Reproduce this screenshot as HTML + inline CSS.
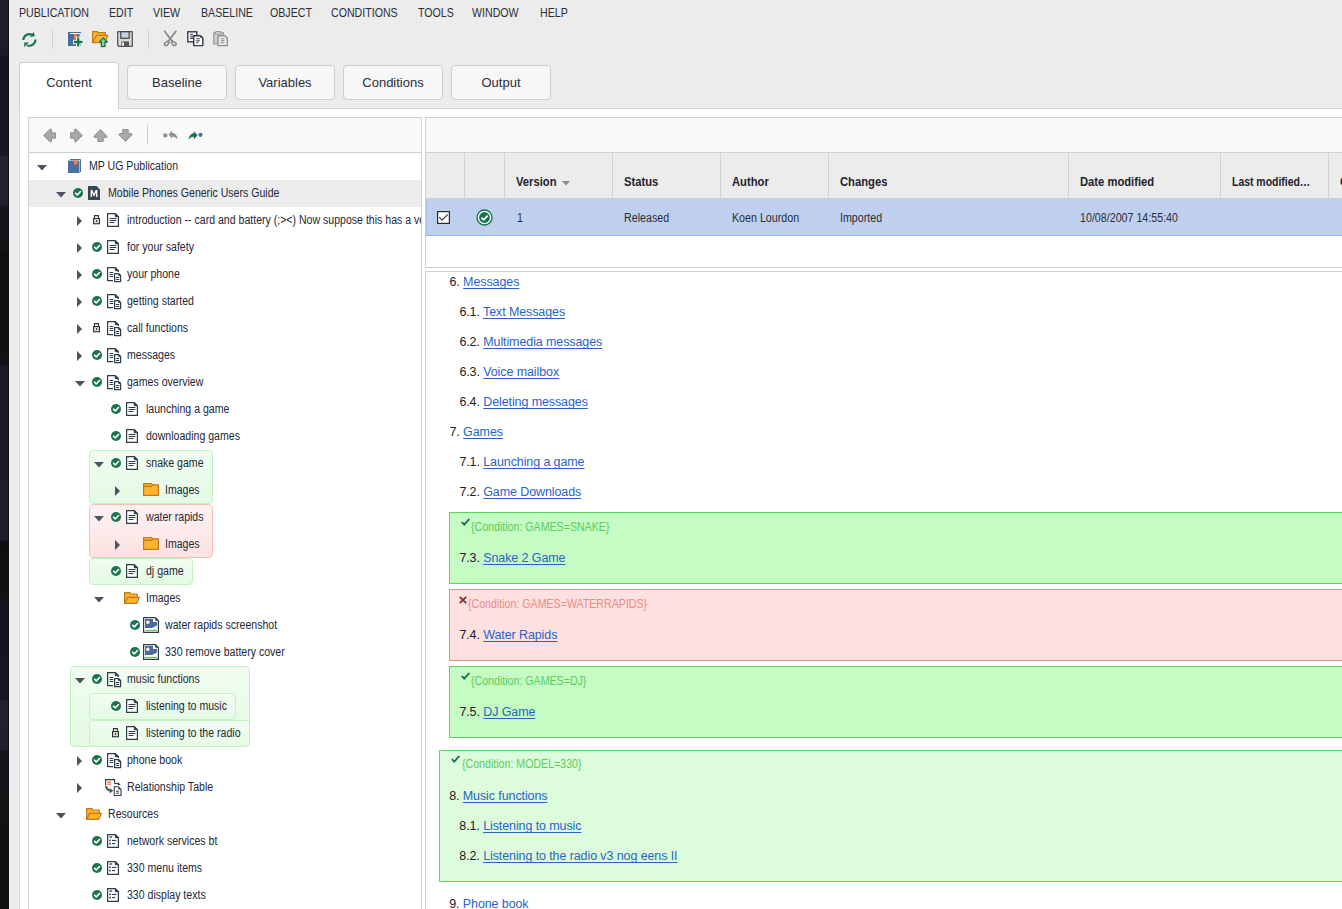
<!DOCTYPE html><html><head><meta charset="utf-8"><title>Publication</title><style>
*{margin:0;padding:0;box-sizing:border-box}
html,body{width:1342px;height:909px;overflow:hidden}
body{position:relative;background:#ececec;font-family:"Liberation Sans",sans-serif;color:#2a2d36}
.ic{position:absolute;overflow:visible}
.desk{position:absolute;left:0;top:0;width:9px;height:909px;border-right:1px solid #08090b;
 background:linear-gradient(180deg,#1d1e26 0px,#1c1d25 55px,#15161b 56px,#17181e 155px,#22232d 157px,#20212b 205px,#16171c 206px,#121317 250px,#0f1013 251px,#111216 365px,#1b1c25 366px,#1c1d27 540px,#0e0f12 541px,#111216 600px,#15161c 601px,#16171d 700px,#21222c 701px,#20212b 750px,#15161b 751px,#131418 800px,#111215 801px,#101114 909px)}
.deskline{position:absolute;left:9px;top:0;width:1px;height:909px;background:#f6f6f6}
.menu{position:absolute;top:5.5px;font-size:12px;line-height:15px;color:#2b2e3a;transform-origin:0 0;transform:scaleX(0.885);white-space:nowrap}
.tsep{position:absolute;width:1px;background:#cfcfcf}
.tab{position:absolute;top:65px;height:35px;width:100px;background:#f7f7f7;border:1px solid #cdcdcd;border-radius:4px;
 font-size:13px;line-height:33px;text-align:center;color:#2b2e3a}
.tab.act{top:62px;height:47px;width:100px;background:#fff;border-bottom:none;border-radius:4px 4px 0 0;line-height:39px}
.content{position:absolute;left:19px;top:108px;width:1323px;height:801px;background:#fff;border-top:1px solid #d6d6d6;border-left:1px solid #d9d9d9}
.lp{position:absolute;left:28px;top:117px;width:394px;height:800px;border:1px solid #d0d0d0;background:#fff;overflow:hidden}
.lptool{position:absolute;left:29px;top:118px;width:392px;height:35px;background:#f9f9f9;border-bottom:1px solid #d0d0d0}
.rp{position:absolute;left:425px;top:117px;width:930px;height:151px;border:1px solid #d0d0d0;background:#fff}
.rptool{position:absolute;left:426px;top:118px;width:920px;height:35px;background:#f9f9f9;border-bottom:1px solid #d0d0d0}
.thead{position:absolute;left:426px;top:153px;width:920px;height:46px;background:#ececec;border-bottom:1px solid #cfcfcf}
.csep{position:absolute;top:153px;width:1px;height:45px;background:#d2d2d2}
.th{position:absolute;top:175px;font-size:12px;font-weight:bold;line-height:15px;color:#1f2230;transform-origin:0 0;transform:scaleX(0.935);white-space:nowrap}
.sel{position:absolute;left:426px;top:199px;width:920px;height:37px;background:#bed0ee;border-bottom:1px solid #94b3e6;border-left:1px solid #a4bde8}
.td{position:absolute;top:211px;font-size:12px;line-height:15px;color:#2a2d36;transform-origin:0 0;transform:scaleX(0.89);white-space:nowrap}
.dp{position:absolute;left:425px;top:271px;width:930px;height:700px;border:1px solid #d0d0d0;background:#fff}
.tree{position:absolute;left:29px;top:153px;width:392px;height:760px;overflow:hidden}
.treein{position:absolute;left:-29px;top:-153px;width:1342px;height:909px}
.hl{position:absolute;left:29px;width:392px;height:27px;background:#ececec}
.tt{position:absolute;white-space:nowrap;font-size:12px;line-height:26px;color:#242838;transform-origin:0 0;transform:scaleX(0.88)}
.tb{position:absolute;border-radius:4px}
.tb-g{background:linear-gradient(180deg,#f1fdf1,#e3fae3);border:1px solid #bff4bf}
.tb-g2{background:linear-gradient(180deg,#f2fdf2,#e5fae5);border:1px solid #c2f4c2}
.tb-r{background:linear-gradient(180deg,#fdf2f2,#fde2e2);border:1px solid #f7bdbd}
.cb{position:absolute;width:1000px}
.cb-g{background:#c4fcc4;border:1px solid #5ed45e}
.cb-r{background:#fde0e0;border:1px solid #e98a8a}
.cb-g2{background:#dcfcdc;border:1px solid #62d862}
.ct{position:absolute;white-space:nowrap;font-size:12px;line-height:14px;transform-origin:0 0;transform:scaleX(0.885)}
.ct-g,.ct-g2{color:#5ccc5c}
.ct-r{color:#ec8a84}
.dl{position:absolute;white-space:nowrap;font-size:12.5px;letter-spacing:-0.1px;line-height:15px;color:#1e2028}
.a{color:#2a63c6;text-decoration:underline;text-decoration-skip-ink:none;text-underline-offset:1.5px}
.nou{text-decoration:none}
</style></head><body>
<div class="desk"></div><div class="deskline"></div>
<div class="menu" style="left:19px">PUBLICATION</div>
<div class="menu" style="left:109px">EDIT</div>
<div class="menu" style="left:153px">VIEW</div>
<div class="menu" style="left:200.5px">BASELINE</div>
<div class="menu" style="left:270px">OBJECT</div>
<div class="menu" style="left:330.5px">CONDITIONS</div>
<div class="menu" style="left:417.5px">TOOLS</div>
<div class="menu" style="left:472px">WINDOW</div>
<div class="menu" style="left:540px">HELP</div>
<svg class="ic" style="left:21px;top:31.5px;" width="16" height="16" viewBox="0 0 16 16"><path d="M2.3 8 A6.2 6.2 0 0 1 11.2 2.8" stroke="#17744c" stroke-width="2.1" fill="none"/><path d="M12.7 -0.1 L13.9 4.2 L8.8 5 Z" fill="#17744c"/><path d="M14.5 7.6 A6.2 6.2 0 0 1 6.2 13.4" stroke="#17744c" stroke-width="2.1" fill="none"/><path d="M3.2 10.6 L7.9 10.6 L3.4 15.3 Z" fill="#17744c"/></svg>
<div class="tsep" style="left:52px;top:29px;height:20px"></div>
<svg class="ic" style="left:68px;top:32px;" width="16" height="16" viewBox="0 0 16 16"><rect x="0" y="0" width="13" height="14" fill="#4a6b9c"/><path d="M2 1.5 H12.2 V12" stroke="#fff" stroke-width="1.2" fill="none"/><rect x="6" y="2" width="3" height="5" fill="#f08050"/><path d="M5 10 H15.4 M10.2 4.8 V15.2" stroke="#fff" stroke-width="4.4"/><path d="M5.8 10 H14.6 M10.2 5.6 V14.4" stroke="#17744c" stroke-width="2.3"/></svg>
<svg class="ic" style="left:92px;top:30.5px;" width="17" height="17" viewBox="0 0 17 17"><path d="M0.6 0.6 H5.4 L6.4 1.6 H13.4 V11.6 H0.6 Z" fill="#ffb42e" stroke="#bf7a1a" stroke-width="1.2" stroke-linejoin="round"/><path d="M0.8 11.4 L4.4 4.4 H15.8 L13.2 11.4 Z" fill="#ffb42e" stroke="#bf7a1a" stroke-width="1.2" stroke-linejoin="round"/><path d="M5.2 11.5 L11.2 5.5 L17.2 11.5 H13.4 V17 H9 V11.5 Z" fill="#fff"/><path d="M7 11 L11.2 6.8 L15.4 11 H13 V15.6 H9.4 V11 Z" fill="#8fd08f" stroke="#17744c" stroke-width="1.3" stroke-linejoin="round"/></svg>
<svg class="ic" style="left:117px;top:30.5px;" width="16" height="16" viewBox="0 0 16 16"><path d="M0.7 0.7 H15.3 V15.3 H1.8 L0.7 14.2 Z" fill="#d9d9d9" stroke="#555" stroke-width="1.3" stroke-linejoin="round"/><rect x="3.8" y="0.7" width="8.4" height="6.6" fill="#c4d0e4" stroke="#444" stroke-width="1.2"/><rect x="4.4" y="10.4" width="7.6" height="4.9" fill="#555"/><rect x="5.2" y="11.4" width="1.8" height="3.4" fill="#fff"/></svg>
<div class="tsep" style="left:148px;top:29px;height:20px"></div>
<svg class="ic" style="left:162.5px;top:31px;" width="15" height="16" viewBox="0 0 15 16"><path d="M1.6 0.3 L9.4 10.6 M12.9 0.3 L5.1 10.6" stroke="#888" stroke-width="1.7" fill="none" stroke-linecap="round"/><path d="M4.6 10.2 L1.2 12.6 L2 14.6 L4.4 14.4 L6.2 11.2 Z" fill="none" stroke="#888" stroke-width="1.5" stroke-linejoin="round"/><path d="M9.9 10.2 L13.3 12.6 L12.5 14.6 L10.1 14.4 L8.3 11.2 Z" fill="none" stroke="#888" stroke-width="1.5" stroke-linejoin="round"/></svg>
<svg class="ic" style="left:186.5px;top:31px;" width="17" height="16" viewBox="0 0 17 16"><rect x="0.8" y="0.8" width="9" height="10" fill="#fff" stroke="#2e3a48" stroke-width="1.4"/><path d="M3 3.2 H6 M3 5.2 H6 M3 7.4 H6" stroke="#2e3a48" stroke-width="1.1"/><path d="M6.7 4.7 H13.6 L15.8 6.9 V14.6 H6.7 Z" fill="#fff" stroke="#2e3a48" stroke-width="1.4" stroke-linejoin="round"/><path d="M13.4 4.9 L15.6 7.1 H13.4 Z" fill="#2e3a48"/><path d="M9.2 7.7 H12.8 M9.2 9.7 H12.8 M9.2 11.7 H11.6" stroke="#2e3a48" stroke-width="1.1"/></svg>
<svg class="ic" style="left:212.5px;top:31px;" width="16" height="16" viewBox="0 0 16 16"><rect x="0.8" y="1.8" width="9.4" height="11" fill="#cfcfcf" stroke="#9a9a9a" stroke-width="1.3"/><rect x="2.5" y="0.6" width="5.5" height="2.4" rx="0.6" fill="#e0e0e0" stroke="#9a9a9a" stroke-width="1.1"/><path d="M5 4.7 H12 L14.3 7 V14.6 H5 Z" fill="#ececec" stroke="#8f8f8f" stroke-width="1.4" stroke-linejoin="round"/><path d="M7.6 7.7 H11.4 M7.6 9.7 H11.4 M7.6 11.7 H11.4" stroke="#8f8f8f" stroke-width="1.1"/></svg>
<div class="content"></div>
<div class="tab" style="left:127px">Baseline</div>
<div class="tab" style="left:235px">Variables</div>
<div class="tab" style="left:343px">Conditions</div>
<div class="tab" style="left:451px">Output</div>
<div class="tab act" style="left:19px">Content</div>
<div class="lp"></div><div class="lptool"></div>
<svg class="ic" style="left:42.5px;top:127.5px;" width="13" height="15" viewBox="0 0 13 15"><path d="M0.6 7.5 L7.5 0.8 L8.5 1.8 V4.8 H12.4 V10.2 H8.5 V13.2 L7.5 14.2 Z" fill="#a9a9a9" stroke="#8f8f8f" stroke-width="1" stroke-linejoin="round"/></svg>
<svg class="ic" style="left:69.5px;top:127.5px;" width="13" height="15" viewBox="0 0 13 15"><path d="M12.4 7.5 L5.5 0.8 L4.5 1.8 V4.8 H0.6 V10.2 H4.5 V13.2 L5.5 14.2 Z" fill="#a9a9a9" stroke="#8f8f8f" stroke-width="1" stroke-linejoin="round"/></svg>
<svg class="ic" style="left:92.5px;top:128.5px;" width="15" height="13" viewBox="0 0 15 13"><path d="M7.5 0.6 L14.2 7.5 L13.2 8.5 H10.2 V12.4 H4.8 V8.5 H1.8 L0.8 7.5 Z" fill="#a9a9a9" stroke="#8f8f8f" stroke-width="1" stroke-linejoin="round"/></svg>
<svg class="ic" style="left:117.5px;top:128.5px;" width="15" height="13" viewBox="0 0 15 13"><path d="M7.5 12.4 L14.2 5.5 L13.2 4.5 H10.2 V0.6 H4.8 V4.5 H1.8 L0.8 5.5 Z" fill="#a9a9a9" stroke="#8f8f8f" stroke-width="1" stroke-linejoin="round"/></svg>
<div class="tsep" style="left:147px;top:125px;height:19px"></div>
<svg class="ic" style="left:162.5px;top:129.5px;" width="16" height="11" viewBox="0 0 16 11"><circle cx="2.3" cy="5.4" r="2.1" fill="#8f8f8f"/><path d="M5.6 4.6 L9 0.5 V8.6 Z" fill="#8f8f8f"/><path d="M8.6 2.8 Q13.6 3 14.8 8.9 Q12.4 6.3 8.6 6.4 Z" fill="#8f8f8f"/></svg>
<svg class="ic" style="left:187.5px;top:129.5px;" width="16" height="11" viewBox="0 0 16 11"><path d="M0.5 9.4 Q1.6 3.4 6.6 3 V6.6 Q2.8 6.6 0.5 9.4 Z" fill="#17744c"/><path d="M5.9 1.3 L9.6 5.3 L5.9 9.6 Z" fill="#17744c"/><circle cx="12.5" cy="4.8" r="2.1" fill="#4a6b9c"/></svg>
<div class="tree"><div class="treein"><div class="hl" style="top:180px"></div>
<div class="tb tb-g" style="left:89px;top:450px;width:124px;height:54px"></div>
<div class="tb tb-r" style="left:89px;top:504px;width:124px;height:54px"></div>
<div class="tb tb-g" style="left:89px;top:558px;width:104px;height:27px"></div>
<div class="tb tb-g" style="left:70px;top:666px;width:180px;height:81px"></div>
<div class="tb tb-g2" style="left:89px;top:693px;width:147px;height:27px"></div>
<div class="tb tb-g2" style="left:89px;top:720px;width:161px;height:27px"></div>
<svg class="ic" style="left:36.5px;top:164.5px;" width="10" height="6" viewBox="0 0 10 6"><path d="M0 0 H10 L5 5.5 Z" fill="#4b5260"/></svg>
<svg class="ic" style="left:68px;top:159px;" width="13" height="14" viewBox="0 0 13 14"><path d="M2 0.5 H12.5 V13" fill="none" stroke="#4a6fa0" stroke-width="1"/><rect x="0" y="1.5" width="11.5" height="12.5" fill="#4a6fa0"/><path d="M6 1.5 H9.5 V6 L7.75 4.8 L6 6 Z" fill="#f08050"/></svg>
<div class="tt" style="left:89px;top:153px">MP UG Publication</div>
<svg class="ic" style="left:55.5px;top:191.5px;" width="10" height="6" viewBox="0 0 10 6"><path d="M0 0 H10 L5 5.5 Z" fill="#4b5260"/></svg>
<svg class="ic" style="left:73px;top:188px;" width="10" height="10" viewBox="0 0 10 10"><circle cx="5" cy="5" r="5" fill="#1b7350"/><path d="M2.6 5.2 L4.3 6.9 L7.5 3.5" stroke="#fff" stroke-width="1.6" fill="none" stroke-linecap="round" stroke-linejoin="round"/></svg>
<svg class="ic" style="left:88px;top:186px;" width="12" height="14" viewBox="0 0 12 14"><path d="M0 0 H8.5 L12 3.5 V14 H0 Z" fill="#3a4656"/><path d="M2.6 11 V4 H4.4 L6 7.8 L7.6 4 H9.4 V11 H8 V6.6 L6.6 10 H5.4 L4 6.6 V11 Z" fill="#fff"/></svg>
<div class="tt" style="left:108px;top:180px">Mobile Phones Generic Users Guide</div>
<svg class="ic" style="left:77.0px;top:216px;" width="6" height="10" viewBox="0 0 6 10"><path d="M0 0 V10 L5 5 Z" fill="#4b5260"/></svg>
<svg class="ic" style="left:92.7px;top:215px;" width="8" height="10" viewBox="0 0 8 10"><path d="M1.5 3.6 V0.6 H5.4 V3.6" stroke="#333" stroke-width="1.1" fill="none"/><rect x="0.55" y="3.55" width="5.9" height="5.2" fill="#dcdcdc" stroke="#333" stroke-width="1.1"/><rect x="3" y="5.2" width="1.1" height="1.8" fill="#333"/></svg>
<svg class="ic" style="left:107px;top:213px;" width="12" height="14" viewBox="0 0 12 14"><path d="M0.6 0.6 H8.4 L11.4 3.6 V13.4 H0.6 Z" fill="#fff" stroke="#2e3a48" stroke-width="1.2" stroke-linejoin="round"/><path d="M8.3 0.8 V3.7 H11.2 Z" fill="#2e3a48" stroke="#2e3a48" stroke-width="1"/><path d="M3 5.5 H9 M3 7.5 H9 M3 9.5 H7" stroke="#2e3a48" stroke-width="1.1" stroke-linecap="round"/></svg>
<div class="tt" style="left:127px;top:207px">introduction -- card and battery (;&gt;&lt;) Now suppose this has a very long title</div>
<svg class="ic" style="left:77.0px;top:243px;" width="6" height="10" viewBox="0 0 6 10"><path d="M0 0 V10 L5 5 Z" fill="#4b5260"/></svg>
<svg class="ic" style="left:92px;top:242px;" width="10" height="10" viewBox="0 0 10 10"><circle cx="5" cy="5" r="5" fill="#1b7350"/><path d="M2.6 5.2 L4.3 6.9 L7.5 3.5" stroke="#fff" stroke-width="1.6" fill="none" stroke-linecap="round" stroke-linejoin="round"/></svg>
<svg class="ic" style="left:107px;top:240px;" width="12" height="14" viewBox="0 0 12 14"><path d="M0.6 0.6 H8.4 L11.4 3.6 V13.4 H0.6 Z" fill="#fff" stroke="#2e3a48" stroke-width="1.2" stroke-linejoin="round"/><path d="M8.3 0.8 V3.7 H11.2 Z" fill="#2e3a48" stroke="#2e3a48" stroke-width="1"/><path d="M3 5.5 H9 M3 7.5 H9 M3 9.5 H7" stroke="#2e3a48" stroke-width="1.1" stroke-linecap="round"/></svg>
<div class="tt" style="left:127px;top:234px">for your safety</div>
<svg class="ic" style="left:77.0px;top:270px;" width="6" height="10" viewBox="0 0 6 10"><path d="M0 0 V10 L5 5 Z" fill="#4b5260"/></svg>
<svg class="ic" style="left:92px;top:269px;" width="10" height="10" viewBox="0 0 10 10"><circle cx="5" cy="5" r="5" fill="#1b7350"/><path d="M2.6 5.2 L4.3 6.9 L7.5 3.5" stroke="#fff" stroke-width="1.6" fill="none" stroke-linecap="round" stroke-linejoin="round"/></svg>
<svg class="ic" style="left:107px;top:267px;" width="15" height="15" viewBox="0 0 15 15"><path d="M6 13.6 H0.6 V0.6 H8.4 L11.4 3.6 V5" fill="none" stroke="#2e3a48" stroke-width="1.2" stroke-linejoin="round"/><path d="M8.3 0.8 V3.7 H11.2 Z" fill="#2e3a48" stroke="#2e3a48" stroke-width="1"/><path d="M3 5.5 H5.8 M3 7.5 H5.8 M3 9.5 H5.8" stroke="#2e3a48" stroke-width="1.1" stroke-linecap="round"/><path d="M7.6 6.6 H11.8 L13.6 8.4 V14.6 H7.6 Z" fill="#fff" stroke="#2e3a48" stroke-width="1.2" stroke-linejoin="round"/><path d="M11.6 6.8 V8.6 H13.4 Z" fill="#2e3a48" stroke="#2e3a48" stroke-width="0.8"/><path d="M9.3 10.5 H11.8 M9.3 12.5 H11.8" stroke="#2e3a48" stroke-width="1.1" stroke-linecap="round"/></svg>
<div class="tt" style="left:127px;top:261px">your phone</div>
<svg class="ic" style="left:77.0px;top:297px;" width="6" height="10" viewBox="0 0 6 10"><path d="M0 0 V10 L5 5 Z" fill="#4b5260"/></svg>
<svg class="ic" style="left:92px;top:296px;" width="10" height="10" viewBox="0 0 10 10"><circle cx="5" cy="5" r="5" fill="#1b7350"/><path d="M2.6 5.2 L4.3 6.9 L7.5 3.5" stroke="#fff" stroke-width="1.6" fill="none" stroke-linecap="round" stroke-linejoin="round"/></svg>
<svg class="ic" style="left:107px;top:294px;" width="15" height="15" viewBox="0 0 15 15"><path d="M6 13.6 H0.6 V0.6 H8.4 L11.4 3.6 V5" fill="none" stroke="#2e3a48" stroke-width="1.2" stroke-linejoin="round"/><path d="M8.3 0.8 V3.7 H11.2 Z" fill="#2e3a48" stroke="#2e3a48" stroke-width="1"/><path d="M3 5.5 H5.8 M3 7.5 H5.8 M3 9.5 H5.8" stroke="#2e3a48" stroke-width="1.1" stroke-linecap="round"/><path d="M7.6 6.6 H11.8 L13.6 8.4 V14.6 H7.6 Z" fill="#fff" stroke="#2e3a48" stroke-width="1.2" stroke-linejoin="round"/><path d="M11.6 6.8 V8.6 H13.4 Z" fill="#2e3a48" stroke="#2e3a48" stroke-width="0.8"/><path d="M9.3 10.5 H11.8 M9.3 12.5 H11.8" stroke="#2e3a48" stroke-width="1.1" stroke-linecap="round"/></svg>
<div class="tt" style="left:127px;top:288px">getting started</div>
<svg class="ic" style="left:77.0px;top:324px;" width="6" height="10" viewBox="0 0 6 10"><path d="M0 0 V10 L5 5 Z" fill="#4b5260"/></svg>
<svg class="ic" style="left:92.7px;top:323px;" width="8" height="10" viewBox="0 0 8 10"><path d="M1.5 3.6 V0.6 H5.4 V3.6" stroke="#333" stroke-width="1.1" fill="none"/><rect x="0.55" y="3.55" width="5.9" height="5.2" fill="#dcdcdc" stroke="#333" stroke-width="1.1"/><rect x="3" y="5.2" width="1.1" height="1.8" fill="#333"/></svg>
<svg class="ic" style="left:107px;top:321px;" width="15" height="15" viewBox="0 0 15 15"><path d="M6 13.6 H0.6 V0.6 H8.4 L11.4 3.6 V5" fill="none" stroke="#2e3a48" stroke-width="1.2" stroke-linejoin="round"/><path d="M8.3 0.8 V3.7 H11.2 Z" fill="#2e3a48" stroke="#2e3a48" stroke-width="1"/><path d="M3 5.5 H5.8 M3 7.5 H5.8 M3 9.5 H5.8" stroke="#2e3a48" stroke-width="1.1" stroke-linecap="round"/><path d="M7.6 6.6 H11.8 L13.6 8.4 V14.6 H7.6 Z" fill="#fff" stroke="#2e3a48" stroke-width="1.2" stroke-linejoin="round"/><path d="M11.6 6.8 V8.6 H13.4 Z" fill="#2e3a48" stroke="#2e3a48" stroke-width="0.8"/><path d="M9.3 10.5 H11.8 M9.3 12.5 H11.8" stroke="#2e3a48" stroke-width="1.1" stroke-linecap="round"/></svg>
<div class="tt" style="left:127px;top:315px">call functions</div>
<svg class="ic" style="left:77.0px;top:351px;" width="6" height="10" viewBox="0 0 6 10"><path d="M0 0 V10 L5 5 Z" fill="#4b5260"/></svg>
<svg class="ic" style="left:92px;top:350px;" width="10" height="10" viewBox="0 0 10 10"><circle cx="5" cy="5" r="5" fill="#1b7350"/><path d="M2.6 5.2 L4.3 6.9 L7.5 3.5" stroke="#fff" stroke-width="1.6" fill="none" stroke-linecap="round" stroke-linejoin="round"/></svg>
<svg class="ic" style="left:107px;top:348px;" width="15" height="15" viewBox="0 0 15 15"><path d="M6 13.6 H0.6 V0.6 H8.4 L11.4 3.6 V5" fill="none" stroke="#2e3a48" stroke-width="1.2" stroke-linejoin="round"/><path d="M8.3 0.8 V3.7 H11.2 Z" fill="#2e3a48" stroke="#2e3a48" stroke-width="1"/><path d="M3 5.5 H5.8 M3 7.5 H5.8 M3 9.5 H5.8" stroke="#2e3a48" stroke-width="1.1" stroke-linecap="round"/><path d="M7.6 6.6 H11.8 L13.6 8.4 V14.6 H7.6 Z" fill="#fff" stroke="#2e3a48" stroke-width="1.2" stroke-linejoin="round"/><path d="M11.6 6.8 V8.6 H13.4 Z" fill="#2e3a48" stroke="#2e3a48" stroke-width="0.8"/><path d="M9.3 10.5 H11.8 M9.3 12.5 H11.8" stroke="#2e3a48" stroke-width="1.1" stroke-linecap="round"/></svg>
<div class="tt" style="left:127px;top:342px">messages</div>
<svg class="ic" style="left:74.5px;top:380.5px;" width="10" height="6" viewBox="0 0 10 6"><path d="M0 0 H10 L5 5.5 Z" fill="#4b5260"/></svg>
<svg class="ic" style="left:92px;top:377px;" width="10" height="10" viewBox="0 0 10 10"><circle cx="5" cy="5" r="5" fill="#1b7350"/><path d="M2.6 5.2 L4.3 6.9 L7.5 3.5" stroke="#fff" stroke-width="1.6" fill="none" stroke-linecap="round" stroke-linejoin="round"/></svg>
<svg class="ic" style="left:107px;top:375px;" width="15" height="15" viewBox="0 0 15 15"><path d="M6 13.6 H0.6 V0.6 H8.4 L11.4 3.6 V5" fill="none" stroke="#2e3a48" stroke-width="1.2" stroke-linejoin="round"/><path d="M8.3 0.8 V3.7 H11.2 Z" fill="#2e3a48" stroke="#2e3a48" stroke-width="1"/><path d="M3 5.5 H5.8 M3 7.5 H5.8 M3 9.5 H5.8" stroke="#2e3a48" stroke-width="1.1" stroke-linecap="round"/><path d="M7.6 6.6 H11.8 L13.6 8.4 V14.6 H7.6 Z" fill="#fff" stroke="#2e3a48" stroke-width="1.2" stroke-linejoin="round"/><path d="M11.6 6.8 V8.6 H13.4 Z" fill="#2e3a48" stroke="#2e3a48" stroke-width="0.8"/><path d="M9.3 10.5 H11.8 M9.3 12.5 H11.8" stroke="#2e3a48" stroke-width="1.1" stroke-linecap="round"/></svg>
<div class="tt" style="left:127px;top:369px">games overview</div>
<svg class="ic" style="left:111px;top:404px;" width="10" height="10" viewBox="0 0 10 10"><circle cx="5" cy="5" r="5" fill="#1b7350"/><path d="M2.6 5.2 L4.3 6.9 L7.5 3.5" stroke="#fff" stroke-width="1.6" fill="none" stroke-linecap="round" stroke-linejoin="round"/></svg>
<svg class="ic" style="left:126px;top:402px;" width="12" height="14" viewBox="0 0 12 14"><path d="M0.6 0.6 H8.4 L11.4 3.6 V13.4 H0.6 Z" fill="#fff" stroke="#2e3a48" stroke-width="1.2" stroke-linejoin="round"/><path d="M8.3 0.8 V3.7 H11.2 Z" fill="#2e3a48" stroke="#2e3a48" stroke-width="1"/><path d="M3 5.5 H9 M3 7.5 H9 M3 9.5 H7" stroke="#2e3a48" stroke-width="1.1" stroke-linecap="round"/></svg>
<div class="tt" style="left:146px;top:396px">launching a game</div>
<svg class="ic" style="left:111px;top:431px;" width="10" height="10" viewBox="0 0 10 10"><circle cx="5" cy="5" r="5" fill="#1b7350"/><path d="M2.6 5.2 L4.3 6.9 L7.5 3.5" stroke="#fff" stroke-width="1.6" fill="none" stroke-linecap="round" stroke-linejoin="round"/></svg>
<svg class="ic" style="left:126px;top:429px;" width="12" height="14" viewBox="0 0 12 14"><path d="M0.6 0.6 H8.4 L11.4 3.6 V13.4 H0.6 Z" fill="#fff" stroke="#2e3a48" stroke-width="1.2" stroke-linejoin="round"/><path d="M8.3 0.8 V3.7 H11.2 Z" fill="#2e3a48" stroke="#2e3a48" stroke-width="1"/><path d="M3 5.5 H9 M3 7.5 H9 M3 9.5 H7" stroke="#2e3a48" stroke-width="1.1" stroke-linecap="round"/></svg>
<div class="tt" style="left:146px;top:423px">downloading games</div>
<svg class="ic" style="left:93.5px;top:461.5px;" width="10" height="6" viewBox="0 0 10 6"><path d="M0 0 H10 L5 5.5 Z" fill="#4b5260"/></svg>
<svg class="ic" style="left:111px;top:458px;" width="10" height="10" viewBox="0 0 10 10"><circle cx="5" cy="5" r="5" fill="#1b7350"/><path d="M2.6 5.2 L4.3 6.9 L7.5 3.5" stroke="#fff" stroke-width="1.6" fill="none" stroke-linecap="round" stroke-linejoin="round"/></svg>
<svg class="ic" style="left:126px;top:456px;" width="12" height="14" viewBox="0 0 12 14"><path d="M0.6 0.6 H8.4 L11.4 3.6 V13.4 H0.6 Z" fill="#fff" stroke="#2e3a48" stroke-width="1.2" stroke-linejoin="round"/><path d="M8.3 0.8 V3.7 H11.2 Z" fill="#2e3a48" stroke="#2e3a48" stroke-width="1"/><path d="M3 5.5 H9 M3 7.5 H9 M3 9.5 H7" stroke="#2e3a48" stroke-width="1.1" stroke-linecap="round"/></svg>
<div class="tt" style="left:146px;top:450px">snake game</div>
<svg class="ic" style="left:115.0px;top:486px;" width="6" height="10" viewBox="0 0 6 10"><path d="M0 0 V10 L5 5 Z" fill="#4b5260"/></svg>
<svg class="ic" style="left:143px;top:483px;" width="16" height="13" viewBox="0 0 16 13"><path d="M0.6 0.6 H8.6 L9.6 1.8 H15.4 V12.4 H0.6 Z" fill="#ffb42e" stroke="#bf7a1a" stroke-width="1.2" stroke-linejoin="round"/><path d="M0.6 3.4 H8.2 L9.6 1.8" fill="none" stroke="#bf7a1a" stroke-width="1.1"/></svg>
<div class="tt" style="left:165px;top:477px">Images</div>
<svg class="ic" style="left:93.5px;top:515.5px;" width="10" height="6" viewBox="0 0 10 6"><path d="M0 0 H10 L5 5.5 Z" fill="#4b5260"/></svg>
<svg class="ic" style="left:111px;top:512px;" width="10" height="10" viewBox="0 0 10 10"><circle cx="5" cy="5" r="5" fill="#1b7350"/><path d="M2.6 5.2 L4.3 6.9 L7.5 3.5" stroke="#fff" stroke-width="1.6" fill="none" stroke-linecap="round" stroke-linejoin="round"/></svg>
<svg class="ic" style="left:126px;top:510px;" width="12" height="14" viewBox="0 0 12 14"><path d="M0.6 0.6 H8.4 L11.4 3.6 V13.4 H0.6 Z" fill="#fff" stroke="#2e3a48" stroke-width="1.2" stroke-linejoin="round"/><path d="M8.3 0.8 V3.7 H11.2 Z" fill="#2e3a48" stroke="#2e3a48" stroke-width="1"/><path d="M3 5.5 H9 M3 7.5 H9 M3 9.5 H7" stroke="#2e3a48" stroke-width="1.1" stroke-linecap="round"/></svg>
<div class="tt" style="left:146px;top:504px">water rapids</div>
<svg class="ic" style="left:115.0px;top:540px;" width="6" height="10" viewBox="0 0 6 10"><path d="M0 0 V10 L5 5 Z" fill="#4b5260"/></svg>
<svg class="ic" style="left:143px;top:537px;" width="16" height="13" viewBox="0 0 16 13"><path d="M0.6 0.6 H8.6 L9.6 1.8 H15.4 V12.4 H0.6 Z" fill="#ffb42e" stroke="#bf7a1a" stroke-width="1.2" stroke-linejoin="round"/><path d="M0.6 3.4 H8.2 L9.6 1.8" fill="none" stroke="#bf7a1a" stroke-width="1.1"/></svg>
<div class="tt" style="left:165px;top:531px">Images</div>
<svg class="ic" style="left:111px;top:566px;" width="10" height="10" viewBox="0 0 10 10"><circle cx="5" cy="5" r="5" fill="#1b7350"/><path d="M2.6 5.2 L4.3 6.9 L7.5 3.5" stroke="#fff" stroke-width="1.6" fill="none" stroke-linecap="round" stroke-linejoin="round"/></svg>
<svg class="ic" style="left:126px;top:564px;" width="12" height="14" viewBox="0 0 12 14"><path d="M0.6 0.6 H8.4 L11.4 3.6 V13.4 H0.6 Z" fill="#fff" stroke="#2e3a48" stroke-width="1.2" stroke-linejoin="round"/><path d="M8.3 0.8 V3.7 H11.2 Z" fill="#2e3a48" stroke="#2e3a48" stroke-width="1"/><path d="M3 5.5 H9 M3 7.5 H9 M3 9.5 H7" stroke="#2e3a48" stroke-width="1.1" stroke-linecap="round"/></svg>
<div class="tt" style="left:146px;top:558px">dj game</div>
<svg class="ic" style="left:93.5px;top:596.5px;" width="10" height="6" viewBox="0 0 10 6"><path d="M0 0 H10 L5 5.5 Z" fill="#4b5260"/></svg>
<svg class="ic" style="left:124px;top:591.5px;" width="16" height="12" viewBox="0 0 16 12"><path d="M0.6 11.4 V0.6 H6 L7 2 H13.4 V6" fill="#ffb42e" stroke="#bf7a1a" stroke-width="1.2" stroke-linejoin="round"/><path d="M0.6 11.4 L3.6 5.4 H15.4 L12.6 11.4 Z" fill="#ffb42e" stroke="#bf7a1a" stroke-width="1.2" stroke-linejoin="round"/></svg>
<div class="tt" style="left:146px;top:585px">Images</div>
<svg class="ic" style="left:130px;top:620px;" width="10" height="10" viewBox="0 0 10 10"><circle cx="5" cy="5" r="5" fill="#1b7350"/><path d="M2.6 5.2 L4.3 6.9 L7.5 3.5" stroke="#fff" stroke-width="1.6" fill="none" stroke-linecap="round" stroke-linejoin="round"/></svg>
<svg class="ic" style="left:143px;top:617px;" width="16" height="16" viewBox="0 0 16 16"><path d="M0.6 0.6 H12.4 L15.4 3.6 V15.4 H0.6 Z" fill="#fff" stroke="#2e3a48" stroke-width="1.2" stroke-linejoin="round"/><path d="M12.3 0.8 L15.2 3.7 H12.3 Z" fill="#2e3a48"/><path d="M2 2 H10 V5 H14 V8.5 L9 11 H2 Z" fill="#4a6b9c"/><circle cx="4.8" cy="5.2" r="1.7" fill="#fff"/><path d="M2 13.4 H14" stroke="#5cbf60" stroke-width="1.1"/></svg>
<div class="tt" style="left:165px;top:612px">water rapids screenshot</div>
<svg class="ic" style="left:130px;top:647px;" width="10" height="10" viewBox="0 0 10 10"><circle cx="5" cy="5" r="5" fill="#1b7350"/><path d="M2.6 5.2 L4.3 6.9 L7.5 3.5" stroke="#fff" stroke-width="1.6" fill="none" stroke-linecap="round" stroke-linejoin="round"/></svg>
<svg class="ic" style="left:143px;top:644px;" width="16" height="16" viewBox="0 0 16 16"><path d="M0.6 0.6 H12.4 L15.4 3.6 V15.4 H0.6 Z" fill="#fff" stroke="#2e3a48" stroke-width="1.2" stroke-linejoin="round"/><path d="M12.3 0.8 L15.2 3.7 H12.3 Z" fill="#2e3a48"/><path d="M2 2 H10 V5 H14 V8.5 L9 11 H2 Z" fill="#4a6b9c"/><circle cx="4.8" cy="5.2" r="1.7" fill="#fff"/><path d="M2 13.4 H14" stroke="#5cbf60" stroke-width="1.1"/></svg>
<div class="tt" style="left:165px;top:639px">330 remove battery cover</div>
<svg class="ic" style="left:74.5px;top:677.5px;" width="10" height="6" viewBox="0 0 10 6"><path d="M0 0 H10 L5 5.5 Z" fill="#4b5260"/></svg>
<svg class="ic" style="left:92px;top:674px;" width="10" height="10" viewBox="0 0 10 10"><circle cx="5" cy="5" r="5" fill="#1b7350"/><path d="M2.6 5.2 L4.3 6.9 L7.5 3.5" stroke="#fff" stroke-width="1.6" fill="none" stroke-linecap="round" stroke-linejoin="round"/></svg>
<svg class="ic" style="left:107px;top:672px;" width="15" height="15" viewBox="0 0 15 15"><path d="M6 13.6 H0.6 V0.6 H8.4 L11.4 3.6 V5" fill="none" stroke="#2e3a48" stroke-width="1.2" stroke-linejoin="round"/><path d="M8.3 0.8 V3.7 H11.2 Z" fill="#2e3a48" stroke="#2e3a48" stroke-width="1"/><path d="M3 5.5 H5.8 M3 7.5 H5.8 M3 9.5 H5.8" stroke="#2e3a48" stroke-width="1.1" stroke-linecap="round"/><path d="M7.6 6.6 H11.8 L13.6 8.4 V14.6 H7.6 Z" fill="#fff" stroke="#2e3a48" stroke-width="1.2" stroke-linejoin="round"/><path d="M11.6 6.8 V8.6 H13.4 Z" fill="#2e3a48" stroke="#2e3a48" stroke-width="0.8"/><path d="M9.3 10.5 H11.8 M9.3 12.5 H11.8" stroke="#2e3a48" stroke-width="1.1" stroke-linecap="round"/></svg>
<div class="tt" style="left:127px;top:666px">music functions</div>
<svg class="ic" style="left:111px;top:701px;" width="10" height="10" viewBox="0 0 10 10"><circle cx="5" cy="5" r="5" fill="#1b7350"/><path d="M2.6 5.2 L4.3 6.9 L7.5 3.5" stroke="#fff" stroke-width="1.6" fill="none" stroke-linecap="round" stroke-linejoin="round"/></svg>
<svg class="ic" style="left:126px;top:699px;" width="12" height="14" viewBox="0 0 12 14"><path d="M0.6 0.6 H8.4 L11.4 3.6 V13.4 H0.6 Z" fill="#fff" stroke="#2e3a48" stroke-width="1.2" stroke-linejoin="round"/><path d="M8.3 0.8 V3.7 H11.2 Z" fill="#2e3a48" stroke="#2e3a48" stroke-width="1"/><path d="M3 5.5 H9 M3 7.5 H9 M3 9.5 H7" stroke="#2e3a48" stroke-width="1.1" stroke-linecap="round"/></svg>
<div class="tt" style="left:146px;top:693px">listening to music</div>
<svg class="ic" style="left:111.7px;top:728px;" width="8" height="10" viewBox="0 0 8 10"><path d="M1.5 3.6 V0.6 H5.4 V3.6" stroke="#333" stroke-width="1.1" fill="none"/><rect x="0.55" y="3.55" width="5.9" height="5.2" fill="#dcdcdc" stroke="#333" stroke-width="1.1"/><rect x="3" y="5.2" width="1.1" height="1.8" fill="#333"/></svg>
<svg class="ic" style="left:126px;top:726px;" width="12" height="14" viewBox="0 0 12 14"><path d="M0.6 0.6 H8.4 L11.4 3.6 V13.4 H0.6 Z" fill="#fff" stroke="#2e3a48" stroke-width="1.2" stroke-linejoin="round"/><path d="M8.3 0.8 V3.7 H11.2 Z" fill="#2e3a48" stroke="#2e3a48" stroke-width="1"/><path d="M3 5.5 H9 M3 7.5 H9 M3 9.5 H7" stroke="#2e3a48" stroke-width="1.1" stroke-linecap="round"/></svg>
<div class="tt" style="left:146px;top:720px">listening to the radio</div>
<svg class="ic" style="left:77.0px;top:756px;" width="6" height="10" viewBox="0 0 6 10"><path d="M0 0 V10 L5 5 Z" fill="#4b5260"/></svg>
<svg class="ic" style="left:92px;top:755px;" width="10" height="10" viewBox="0 0 10 10"><circle cx="5" cy="5" r="5" fill="#1b7350"/><path d="M2.6 5.2 L4.3 6.9 L7.5 3.5" stroke="#fff" stroke-width="1.6" fill="none" stroke-linecap="round" stroke-linejoin="round"/></svg>
<svg class="ic" style="left:107px;top:753px;" width="15" height="15" viewBox="0 0 15 15"><path d="M6 13.6 H0.6 V0.6 H8.4 L11.4 3.6 V5" fill="none" stroke="#2e3a48" stroke-width="1.2" stroke-linejoin="round"/><path d="M8.3 0.8 V3.7 H11.2 Z" fill="#2e3a48" stroke="#2e3a48" stroke-width="1"/><path d="M3 5.5 H5.8 M3 7.5 H5.8 M3 9.5 H5.8" stroke="#2e3a48" stroke-width="1.1" stroke-linecap="round"/><path d="M7.6 6.6 H11.8 L13.6 8.4 V14.6 H7.6 Z" fill="#fff" stroke="#2e3a48" stroke-width="1.2" stroke-linejoin="round"/><path d="M11.6 6.8 V8.6 H13.4 Z" fill="#2e3a48" stroke="#2e3a48" stroke-width="0.8"/><path d="M9.3 10.5 H11.8 M9.3 12.5 H11.8" stroke="#2e3a48" stroke-width="1.1" stroke-linecap="round"/></svg>
<div class="tt" style="left:127px;top:747px">phone book</div>
<svg class="ic" style="left:77.0px;top:783px;" width="6" height="10" viewBox="0 0 6 10"><path d="M0 0 V10 L5 5 Z" fill="#4b5260"/></svg>
<svg class="ic" style="left:105px;top:779px;" width="17" height="17" viewBox="0 0 17 17"><path d="M0.6 6.5 V0.6 H9.6 V4.4" fill="none" stroke="#2e3a48" stroke-width="1.1"/><path d="M2.2 3.1 H6 M2.2 5.1 H6" stroke="#f07040" stroke-width="1.1"/><path d="M9.6 4.5 H13.8" stroke="#2e3a48" stroke-width="1.1"/><path d="M13 3.2 L15.8 6 H12.6 Z" fill="#2e3a48"/><path d="M1 7.2 Q1.6 11.2 5.4 11.6" stroke="#555" stroke-width="2.2" fill="none"/><path d="M4.8 9 L8.2 11.8 L4.8 14.4 Z" fill="#555"/><path d="M9.2 7.8 H13.4 L16 10.4 V16.5 H9.2 Z" fill="#fff" stroke="#2e3a48" stroke-width="1.1" stroke-linejoin="round"/><path d="M13.3 8 L15.8 10.5 H13.3 Z" fill="#2e3a48"/><path d="M11 12.2 H14 M11 14.2 H14" stroke="#2e3a48" stroke-width="1"/></svg>
<div class="tt" style="left:127px;top:774px">Relationship Table</div>
<svg class="ic" style="left:55.5px;top:812.5px;" width="10" height="6" viewBox="0 0 10 6"><path d="M0 0 H10 L5 5.5 Z" fill="#4b5260"/></svg>
<svg class="ic" style="left:86px;top:807.5px;" width="16" height="12" viewBox="0 0 16 12"><path d="M0.6 11.4 V0.6 H6 L7 2 H13.4 V6" fill="#ffb42e" stroke="#bf7a1a" stroke-width="1.2" stroke-linejoin="round"/><path d="M0.6 11.4 L3.6 5.4 H15.4 L12.6 11.4 Z" fill="#ffb42e" stroke="#bf7a1a" stroke-width="1.2" stroke-linejoin="round"/></svg>
<div class="tt" style="left:108px;top:801px">Resources</div>
<svg class="ic" style="left:92px;top:836px;" width="10" height="10" viewBox="0 0 10 10"><circle cx="5" cy="5" r="5" fill="#1b7350"/><path d="M2.6 5.2 L4.3 6.9 L7.5 3.5" stroke="#fff" stroke-width="1.6" fill="none" stroke-linecap="round" stroke-linejoin="round"/></svg>
<svg class="ic" style="left:107px;top:834px;" width="12" height="14" viewBox="0 0 12 14"><path d="M0.6 0.6 H8.4 L11.4 3.6 V13.4 H0.6 Z" fill="#fff" stroke="#2e3a48" stroke-width="1.2" stroke-linejoin="round"/><path d="M8.3 0.8 V3.7 H11.2 Z" fill="#2e3a48" stroke="#2e3a48" stroke-width="1"/><path d="M2.4 3 H5.2" stroke="#2e3a48" stroke-width="1.3"/><rect x="2.2" y="5.6" width="1.6" height="1.6" fill="#2e3a48"/><path d="M5 6.4 H9.4" stroke="#2e3a48" stroke-width="1.1"/><rect x="2.2" y="8.8" width="1.6" height="1.6" fill="#2e3a48"/><path d="M5 9.6 H8.2" stroke="#2e3a48" stroke-width="1.1"/></svg>
<div class="tt" style="left:127px;top:828px">network services bt</div>
<svg class="ic" style="left:92px;top:863px;" width="10" height="10" viewBox="0 0 10 10"><circle cx="5" cy="5" r="5" fill="#1b7350"/><path d="M2.6 5.2 L4.3 6.9 L7.5 3.5" stroke="#fff" stroke-width="1.6" fill="none" stroke-linecap="round" stroke-linejoin="round"/></svg>
<svg class="ic" style="left:107px;top:861px;" width="12" height="14" viewBox="0 0 12 14"><path d="M0.6 0.6 H8.4 L11.4 3.6 V13.4 H0.6 Z" fill="#fff" stroke="#2e3a48" stroke-width="1.2" stroke-linejoin="round"/><path d="M8.3 0.8 V3.7 H11.2 Z" fill="#2e3a48" stroke="#2e3a48" stroke-width="1"/><path d="M2.4 3 H5.2" stroke="#2e3a48" stroke-width="1.3"/><rect x="2.2" y="5.6" width="1.6" height="1.6" fill="#2e3a48"/><path d="M5 6.4 H9.4" stroke="#2e3a48" stroke-width="1.1"/><rect x="2.2" y="8.8" width="1.6" height="1.6" fill="#2e3a48"/><path d="M5 9.6 H8.2" stroke="#2e3a48" stroke-width="1.1"/></svg>
<div class="tt" style="left:127px;top:855px">330 menu items</div>
<svg class="ic" style="left:92px;top:890px;" width="10" height="10" viewBox="0 0 10 10"><circle cx="5" cy="5" r="5" fill="#1b7350"/><path d="M2.6 5.2 L4.3 6.9 L7.5 3.5" stroke="#fff" stroke-width="1.6" fill="none" stroke-linecap="round" stroke-linejoin="round"/></svg>
<svg class="ic" style="left:107px;top:888px;" width="12" height="14" viewBox="0 0 12 14"><path d="M0.6 0.6 H8.4 L11.4 3.6 V13.4 H0.6 Z" fill="#fff" stroke="#2e3a48" stroke-width="1.2" stroke-linejoin="round"/><path d="M8.3 0.8 V3.7 H11.2 Z" fill="#2e3a48" stroke="#2e3a48" stroke-width="1"/><path d="M2.4 3 H5.2" stroke="#2e3a48" stroke-width="1.3"/><rect x="2.2" y="5.6" width="1.6" height="1.6" fill="#2e3a48"/><path d="M5 6.4 H9.4" stroke="#2e3a48" stroke-width="1.1"/><rect x="2.2" y="8.8" width="1.6" height="1.6" fill="#2e3a48"/><path d="M5 9.6 H8.2" stroke="#2e3a48" stroke-width="1.1"/></svg>
<div class="tt" style="left:127px;top:882px">330 display texts</div></div></div>
<div class="rp"></div><div class="rptool"></div><div class="thead"></div>
<div class="csep" style="left:464px"></div>
<div class="csep" style="left:504px"></div>
<div class="csep" style="left:612px"></div>
<div class="csep" style="left:720px"></div>
<div class="csep" style="left:828px"></div>
<div class="csep" style="left:1068px"></div>
<div class="csep" style="left:1220px"></div>
<div class="csep" style="left:1328px"></div>
<div class="th" style="left:516px;">Version</div>
<div class="th" style="left:624px;">Status</div>
<div class="th" style="left:732px;">Author</div>
<div class="th" style="left:840px;">Changes</div>
<div class="th" style="left:1080px;">Date modified</div>
<div class="th" style="left:1232px;transform:scaleX(0.87);">Last modified…</div>
<div class="th" style="left:1340px;">Comment</div>
<svg class="ic" style="left:562px;top:181px;" width="8" height="5" viewBox="0 0 8 5"><path d="M0 0 H8 L4 4.5 Z" fill="#8a8a8a"/></svg>
<div class="sel"></div>
<svg class="ic" style="left:437px;top:211px;" width="14" height="14" viewBox="0 0 14 14"><rect x="0.6" y="0.6" width="11.8" height="11.8" fill="#fff" stroke="#2a2a2a" stroke-width="1.2"/><path d="M2.2 6.2 L5 9.2 L10.8 3.4" stroke="#333" stroke-width="1.1" fill="none"/></svg>
<svg class="ic" style="left:475.5px;top:208.5px;" width="17" height="17" viewBox="0 0 17 17"><circle cx="8.5" cy="8.5" r="7.5" fill="#fff" stroke="#17744c" stroke-width="1.4"/><circle cx="8.5" cy="8.5" r="5.4" fill="#17744c"/><path d="M5.5 8.6 L7.7 10.8 L11.7 6.6" stroke="#fff" stroke-width="1.7" fill="none"/></svg>
<div class="td" style="left:517px">1</div>
<div class="td" style="left:624px">Released</div>
<div class="td" style="left:732px">Koen Lourdon</div>
<div class="td" style="left:840px">Imported</div>
<div class="td" style="left:1080px">10/08/2007 14:55:40</div>
<div class="dp"></div>
<div class="cb cb-g" style="left:449px;top:512px;height:72px"></div>
<div class="cb cb-r" style="left:449px;top:589px;height:72px"></div>
<div class="cb cb-g" style="left:449px;top:666px;height:72px"></div>
<div class="cb cb-g2" style="left:439px;top:750px;height:132px"></div>
<svg class="ic" style="left:460.9px;top:517.6px;" width="9" height="8" viewBox="0 0 9 8"><path d="M0.8 4 L3.3 6.6 L8.3 1" stroke="#17694b" stroke-width="1.8" fill="none"/></svg>
<div class="ct ct-g" style="left:471.4px;top:519.6px">{Condition: GAMES=SNAKE}</div>
<svg class="ic" style="left:459.0px;top:595.5px;" width="8" height="8" viewBox="0 0 8 8"><path d="M0.8 0.8 L7.2 7.2 M7.2 0.8 L0.8 7.2" stroke="#8a2c24" stroke-width="1.8" fill="none"/></svg>
<div class="ct ct-r" style="left:467.5px;top:597px">{Condition: GAMES=WATERRAPIDS}</div>
<svg class="ic" style="left:460.9px;top:671.6px;" width="9" height="8" viewBox="0 0 9 8"><path d="M0.8 4 L3.3 6.6 L8.3 1" stroke="#17694b" stroke-width="1.8" fill="none"/></svg>
<div class="ct ct-g" style="left:471.4px;top:673.6px">{Condition: GAMES=DJ}</div>
<svg class="ic" style="left:451.3px;top:755.4px;" width="9" height="8" viewBox="0 0 9 8"><path d="M0.8 4 L3.3 6.6 L8.3 1" stroke="#17694b" stroke-width="1.8" fill="none"/></svg>
<div class="ct ct-g2" style="left:461.8px;top:757.4px">{Condition: MODEL=330}</div>
<div class="dl" style="left:449.5px;top:275px">6. <span class="a">Messages</span></div>
<div class="dl" style="left:459.4px;top:305px">6.1. <span class="a">Text Messages</span></div>
<div class="dl" style="left:459.4px;top:335px">6.2. <span class="a">Multimedia messages</span></div>
<div class="dl" style="left:459.4px;top:365px">6.3. <span class="a">Voice mailbox</span></div>
<div class="dl" style="left:459.4px;top:395px">6.4. <span class="a">Deleting messages</span></div>
<div class="dl" style="left:449.5px;top:425px">7. <span class="a">Games</span></div>
<div class="dl" style="left:459.4px;top:455px">7.1. <span class="a">Launching a game</span></div>
<div class="dl" style="left:459.4px;top:485px">7.2. <span class="a">Game Downloads</span></div>
<div class="dl" style="left:459.4px;top:551px">7.3. <span class="a">Snake 2 Game</span></div>
<div class="dl" style="left:459.4px;top:628px">7.4. <span class="a">Water Rapids</span></div>
<div class="dl" style="left:459.4px;top:705px">7.5. <span class="a">DJ Game</span></div>
<div class="dl" style="left:449.2px;top:788.5px">8. <span class="a">Music functions</span></div>
<div class="dl" style="left:459.3px;top:818.7px">8.1. <span class="a">Listening to music</span></div>
<div class="dl" style="left:459.3px;top:848.6px">8.2. <span class="a">Listening to the radio v3 nog eens II</span></div>
<div class="dl" style="left:449.2px;top:897px">9. <span class="a nou">Phone book</span></div>
</body></html>
